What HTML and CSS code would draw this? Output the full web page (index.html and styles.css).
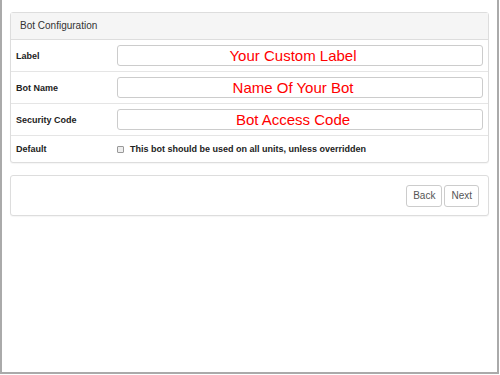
FILE: index.html
```html
<!DOCTYPE html>
<html lang="en">
<head>
    <meta charset="UTF-8">
    <title>Bot Configuration</title>
    <link rel="stylesheet" href="styles.css">
</head>
<body>

    <div class="frame">

        <div class="panel">
            <div class="panel-heading">Bot Configuration</div>

            <div class="form-row">
                <label for="label">Label</label>
                <input type="text" id="label" placeholder="Your Custom Label">
            </div>

            <div class="form-row">
                <label for="botName">Bot Name</label>
                <input type="text" id="botName" placeholder="Name Of Your Bot">
            </div>

            <div class="form-row">
                <label for="securityCode">Security Code</label>
                <input type="text" id="securityCode" placeholder="Bot Access Code">
            </div>

            <div class="form-row form-row-last">
                <label>Default</label>
                <div class="check">
                    <input type="checkbox" id="isDefault">
                    <label for="isDefault">This bot should be used on all units, unless overridden</label>
                </div>
            </div>
        </div>

        <div class="panel panel-actions">
            <button type="button" class="btn">Back</button>
            <button type="button" class="btn">Next</button>
        </div>

    </div>

</body>
</html>
```

FILE: styles.css
```css
html, body {
    margin: 0;
    padding: 0;
    background-color: #fff;
}

body {
    font-family: 'Liberation Sans', Arial, sans-serif;
    color: #333;
}

.frame {
    box-sizing: border-box;
    width: 499px;
    height: 374px;
    border: 2px solid #aaa;
    border-top: none;
    padding: 12px 8px 0;
}

.panel {
    border: 1px solid #ddd;
    border-radius: 3px;
    background-color: #fff;
    box-shadow: 0 1px 1px rgba(0, 0, 0, 0.04);
}

.panel-heading {
    height: 26px;
    line-height: 26px;
    padding: 0 9px;
    background-color: #f5f5f5;
    border-bottom: 1px solid #ddd;
    font-size: 10px;
    color: #333;
}

.form-row {
    display: flex;
    align-items: center;
    height: 31px;
    padding: 0 5px 0 5px;
    border-bottom: 1px solid #e5e5e5;
}

.form-row-last {
    border-bottom: none;
    height: 26px;
}

.form-row > label {
    width: 101px;
    font-size: 9px;
    font-weight: bold;
    color: #222;
}

.form-row input[type="text"] {
    box-sizing: border-box;
    width: 366px;
    height: 21px;
    border: 1px solid #ccc;
    border-radius: 3px;
    font-family: 'Liberation Sans', Arial, sans-serif;
    font-size: 15px;
    text-align: center;
    padding: 0 14px 0 0;
    color: #f00;
}

.form-row input::placeholder {
    color: #f00;
    opacity: 1;
}

.check {
    display: flex;
    align-items: center;
    gap: 6px;
}

.check input {
    appearance: none;
    -webkit-appearance: none;
    box-sizing: border-box;
    margin: 0;
    width: 7px;
    height: 7px;
    border: 1px solid #999;
    border-radius: 1px;
    background-color: #eee;
}

.check label {
    font-size: 9px;
    font-weight: bold;
    color: #222;
}

.panel-actions {
    margin-top: 12px;
    height: 39px;
    display: flex;
    justify-content: flex-end;
    align-items: center;
    gap: 2px;
    padding-right: 9px;
}

.btn {
    height: 22px;
    padding: 0 6px;
    border: 1px solid #ccc;
    border-radius: 3px;
    background-color: #fff;
    font-family: 'Liberation Sans', Arial, sans-serif;
    font-size: 10px;
    color: #555;
    cursor: pointer;
}
```
